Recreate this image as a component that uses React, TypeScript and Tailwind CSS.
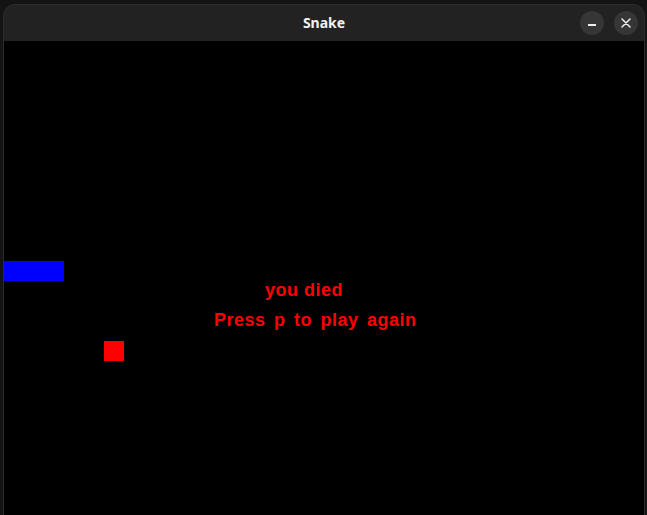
import React from "react";

export default function App() {
  return (
    <div className="relative w-[647px] h-[515px] overflow-hidden bg-[#141414] pl-[3px] pt-[4px]">
      <div className="w-[642px] h-[520px] flex flex-col rounded-t-[12px] border border-[#2c2c2c] bg-[#222222] overflow-hidden">
        <div className="relative h-[36px] shrink-0 flex items-center justify-center">
          <span
            className="text-[14px] font-bold text-[#f2f2f2] leading-none"
            style={{ fontFamily: '"Noto Sans", "DejaVu Sans", sans-serif' }}
          >
            Snake
          </span>
          <div className="absolute right-[6px] top-[6px] flex gap-[10px]">
            <div className="w-[24px] h-[24px] rounded-full bg-[#363636] flex items-center justify-center">
              <div className="w-[8px] h-[1.5px] bg-[#eeeeee] mt-[4px]" />
            </div>
            <div className="w-[24px] h-[24px] rounded-full bg-[#363636] flex items-center justify-center">
              <svg width="10" height="10" viewBox="0 0 10 10">
                <path d="M1 1 L9 9 M9 1 L1 9" stroke="#eeeeee" strokeWidth="1.5" strokeLinecap="round" />
              </svg>
            </div>
          </div>
        </div>
        <div className="relative flex-1 bg-black">
          <div className="absolute left-0 top-[220px] w-[60px] h-[20px] bg-[#0000ff]" />
          <div className="absolute left-[100px] top-[300px] w-[20px] h-[20px] bg-[#ff0000]" />
          <div
            className="absolute left-[261px] top-[240px] text-[18px] leading-[18px] font-bold text-[#ff0000] whitespace-nowrap tracking-[0.5px]"
            style={{ fontFamily: '"Liberation Sans", Arial, sans-serif' }}
          >
            you died
          </div>
          <div
            className="absolute left-[210px] top-[270px] text-[18px] leading-[18px] font-bold text-[#ff0000] whitespace-nowrap tracking-[0.5px] [word-spacing:3px]"
            style={{ fontFamily: '"Liberation Sans", Arial, sans-serif' }}
          >
            Press p to play again
          </div>
        </div>
      </div>
    </div>
  );
}
